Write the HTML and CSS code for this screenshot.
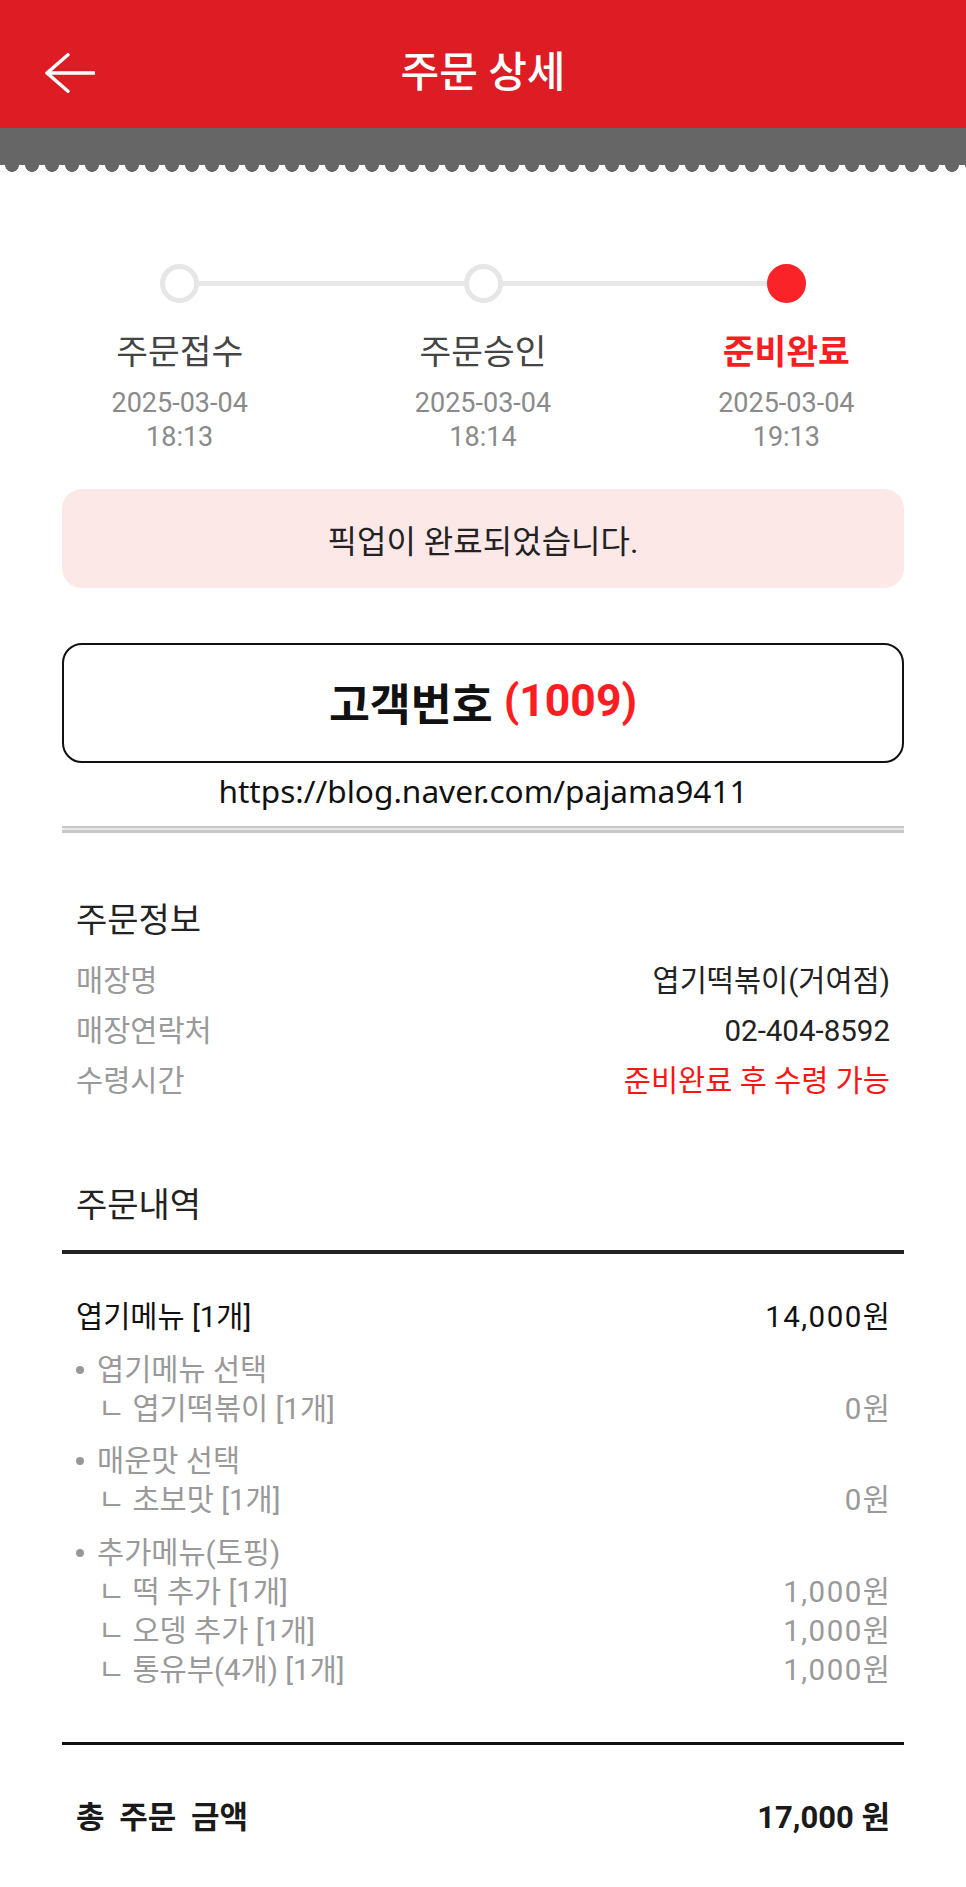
FILE: index.html
```html
<!DOCTYPE html>
<html lang="ko">
<head>
    <meta charset="UTF-8">
    <meta name="viewport" content="width=device-width, initial-scale=1.0">
    <title>주문 상세</title>
    <link rel="stylesheet" href="styles.css">
</head>
<body>
    <header class="topbar">
        <a class="back" href="#" aria-label="뒤로">
            <svg width="50" height="40" viewBox="0 0 50 40" fill="none" stroke="#fff" stroke-width="3.5" stroke-linecap="round" stroke-linejoin="round">
                <path d="M2 20 H49 M2 20 L23 1.8 M2 20 L23 38.2"/>
            </svg>
        </a>
        <h1>주문 상세</h1>
        <span></span>
    </header>
    <div class="band"></div>
    <div class="scallop"></div>

    <section class="steps">
        <div class="step">
            <div class="track"><span class="seg blank"></span><span class="dot"></span><span class="seg"></span></div>
            <p class="step-name">주문접수</p>
            <p class="step-time">2025-03-04<br>18:13</p>
        </div>
        <div class="step">
            <div class="track"><span class="seg"></span><span class="dot"></span><span class="seg"></span></div>
            <p class="step-name">주문승인</p>
            <p class="step-time">2025-03-04<br>18:14</p>
        </div>
        <div class="step">
            <div class="track"><span class="seg"></span><span class="dot on"></span><span class="seg blank"></span></div>
            <p class="step-name on">준비완료</p>
            <p class="step-time">2025-03-04<br>19:13</p>
        </div>
    </section>

    <main class="content">
        <div class="notice">픽업이 완료되었습니다.</div>

        <div class="customer">고객번호 <span class="num">(1009)</span></div>
        <p class="url">https://blog.naver.com/pajama9411</p>
        <div class="double-rule"></div>

        <section class="info">
            <h2>주문정보</h2>
            <div class="rows">
                <div class="row"><span class="label">매장명</span><span>엽기떡볶이(거여점)</span></div>
                <div class="row"><span class="label">매장연락처</span><span>02-404-8592</span></div>
                <div class="row"><span class="label">수령시간</span><span class="red">준비완료 후 수령 가능</span></div>
            </div>
        </section>

        <section class="order">
            <h2 class="order-title">주문내역</h2>
            <div class="items">
                <div class="item-row main"><span>엽기메뉴 [1개]</span><span class="price">14,000원</span></div>

                <div class="opt-group">
                    <div class="item-row opt-title"><span>엽기메뉴 선택</span></div>
                    <div class="item-row opt"><span>ㄴ 엽기떡볶이 [1개]</span><span class="price">0원</span></div>
                </div>

                <div class="opt-group">
                    <div class="item-row opt-title"><span>매운맛 선택</span></div>
                    <div class="item-row opt"><span>ㄴ 초보맛 [1개]</span><span class="price">0원</span></div>
                </div>

                <div class="opt-group">
                    <div class="item-row opt-title"><span>추가메뉴(토핑)</span></div>
                    <div class="item-row opt"><span>ㄴ 떡 추가 [1개]</span><span class="price">1,000원</span></div>
                    <div class="item-row opt"><span>ㄴ 오뎅 추가 [1개]</span><span class="price">1,000원</span></div>
                    <div class="item-row opt"><span>ㄴ 통유부(4개) [1개]</span><span class="price">1,000원</span></div>
                </div>
            </div>
        </section>

        <div class="total">
            <span class="total-label">총 주문 금액</span>
            <span>17,000 원</span>
        </div>
    </main>
</body>
</html>
```

FILE: styles.css
```css
* {
    box-sizing: border-box;
}

body {
    margin: 0;
    font-family: Roboto, "Noto Sans CJK KR", sans-serif;
    color: #222;
    background-color: #fff;
}

/* header */
.topbar {
    height: 128px;
    padding-top: 18px;
    background-color: #dd1c24;
    display: grid;
    grid-template-columns: 1fr auto 1fr;
    align-items: center;
}

.back {
    display: flex;
    padding-left: 45px;
}

.topbar h1 {
    margin: 0;
    color: #fff;
    font-size: 42px;
    font-weight: 500;
    line-height: 42px;
}

.band {
    height: 37px;
    background-color: #666;
}

.scallop {
    height: 8px;
    background: radial-gradient(circle at 10px 0, #666 6.5px, transparent 7.2px) 2px 0 / 20px 8px repeat-x;
}

/* progress */
.steps {
    display: grid;
    grid-template-columns: repeat(3, 1fr);
    padding: 91px 28px 0;
    text-align: center;
}

.track {
    display: flex;
    align-items: center;
    height: 39px;
}

.seg {
    flex: 1;
    height: 5px;
    background-color: #e8e8e8;
}

.seg.blank {
    background-color: transparent;
}

.dot {
    width: 39px;
    height: 39px;
    border: 5px solid #e6e6e6;
    border-radius: 50%;
    background-color: #fff;
}

.dot.on {
    background-color: #fa2328;
    border-color: #fa2328;
}

.step-name {
    margin: 29px 0 0;
    font-size: 34.5px;
    line-height: 40px;
    color: #444;
}

.step-name.on {
    color: #fa1e23;
    font-weight: 700;
}

.step-time {
    margin: 14px 0 0;
    font-size: 27px;
    line-height: 34px;
    color: #8a8a8a;
}

/* body */
.content {
    padding: 35px 62px 49px;
}

.notice {
    height: 99px;
    border-radius: 20px;
    background-color: #fde8e8;
    display: flex;
    align-items: center;
    justify-content: center;
    font-size: 32px;
    color: #222;
}

.customer {
    margin-top: 55px;
    height: 120px;
    padding-bottom: 4px;
    border: 2px solid #111;
    border-radius: 20px;
    display: flex;
    align-items: center;
    justify-content: center;
    font-size: 44.5px;
    font-weight: 700;
    color: #111;
    white-space: pre;
}

.customer .num {
    color: #fa1e23;
}

.url {
    margin: 8px 0 0;
    text-align: center;
    font-family: "Noto Sans", sans-serif;
    font-size: 31.6px;
    line-height: 40px;
    color: #111;
}

.double-rule {
    margin-top: 15px;
    height: 7px;
    border-top: 2px solid #c8c8c8;
    border-bottom: 3px solid #c8c8c8;
    background-color: #e9e9e9;
}

.info {
    padding: 0 14px;
}

.info h2,
.order-title {
    margin: 0;
    font-size: 34px;
    font-weight: 400;
    line-height: 44px;
    color: #222;
}

.info h2 {
    margin-top: 65px;
}

.rows {
    margin-top: 14px;
}

.row {
    display: flex;
    justify-content: space-between;
    font-size: 29.5px;
    line-height: 50px;
}

.label {
    color: #999;
}

.red {
    color: #ff1414;
}

.order-title {
    margin-top: 77px;
    padding: 0 14px 23px;
    border-bottom: 4px solid #222;
}

.items {
    padding: 44px 14px 0;
}

.item-row {
    display: flex;
    justify-content: space-between;
    font-size: 29.5px;
    line-height: 39px;
}

.item-row.main {
    color: #111;
}

.price {
    letter-spacing: 1.5px;
    margin-right: -1.5px;
}

.opt-group {
    margin-top: 13.5px;
    color: #999;
}

.opt-title span::before {
    content: "";
    display: inline-block;
    width: 8px;
    height: 8px;
    margin-right: 13px;
    border-radius: 50%;
    background-color: #999;
    vertical-align: 0.2em;
}

.item-row.opt {
    padding-left: 22px;
}

.total {
    margin-top: 52px;
    padding: 53px 14px 0;
    border-top: 3px solid #111;
    display: flex;
    justify-content: space-between;
    font-size: 31px;
    font-weight: 700;
    line-height: 40px;
    color: #1a1a1a;
}

.total-label {
    word-spacing: 7px;
}
```
